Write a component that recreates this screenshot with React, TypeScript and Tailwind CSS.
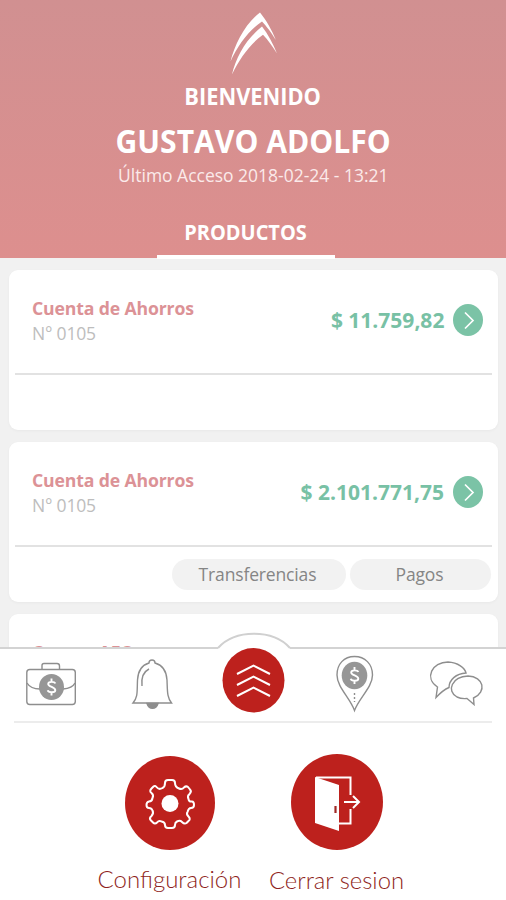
import type { ReactNode } from 'react';

type Account = {
  name: string;
  number?: string;
  balance?: string;
  actions?: boolean;
};

const accounts: Account[] = [
  { name: 'Cuenta de Ahorros', number: 'N° 0105', balance: '$ 11.759,82' },
  { name: 'Cuenta de Ahorros', number: 'N° 0105', balance: '$ 2.101.771,75', actions: true },
  { name: 'Cuenta AFC' },
];

function Logo() {
  return (
    <svg className="block h-[64px] w-[50px] shrink-0" viewBox="0 0 50 64">
      <path d="M2.500 49.500C7 32 17 12 32 0.500C38 8 44 18 47.800 28C43 20 39 15 34 9.500C21 18 10 33 2.500 49.500Z" fill="#fff" />
      <path d="M4 62.500C8 45 18 27 34 14.500C40 22 45 32 49 41.500C44 34 40 28 35 22.800C22 32 12 46 4 62.500Z" fill="#fff" />
    </svg>
  );
}

function AccountCard({ name, number, balance, actions }: Account) {
  return (
    <div className="h-[160px] shrink-0 rounded-[9px] bg-white shadow-[0_1px_3px_rgba(0,0,0,0.04)]">
      <div className="mx-[6px] flex h-[105px] justify-between border-b-2 border-[#e2e2e2] pl-[17px] pr-[9px]">
        <div className="pt-[26px]">
          <div className="origin-left scale-x-[0.98] text-[18px] font-bold leading-[25px] tracking-[-0.15px] text-[#dc9296]">{name}</div>
          <div className="text-[17.5px] leading-[25px] tracking-[-0.2px] text-[#bdbdbd]">{number}</div>
        </div>
        {balance && (
          <div className="flex h-[100px] items-center gap-[9px] text-[20.8px] font-bold text-[#78c1a5]">
            <span className="origin-right scale-x-[1.01] leading-[28px]">{balance}</span>
            <svg className="h-[32px] w-[30px]" viewBox="0 0 30 32">
              <ellipse cx="15" cy="16" rx="15" ry="16" fill="#7bc3a6" />
              <path d="M12 8.500L20 16.500L12 24.500" fill="none" stroke="#fff" strokeWidth="1.7" />
            </svg>
          </div>
        )}
      </div>
      {actions && (
        <div className="flex justify-end gap-[4px] pr-[7px] pt-[12px] text-[17.5px] leading-[31px] tracking-[-0.15px] text-[#858585]">
          <button className="h-[31px] w-[174px] rounded-full bg-[#f2f2f2] pr-[3px]">Transferencias</button>
          <button className="h-[31px] w-[141px] rounded-full bg-[#f2f2f2] pr-[2px]">Pagos</button>
        </div>
      )}
    </div>
  );
}

function DollarBadge({ x, y, rx, ry }: { x: number; y: number; rx: number; ry: number }) {
  return (
    <g transform={`translate(${x} ${y})`}>
      <ellipse rx={rx} ry={ry} fill="#969696" stroke="none" />
      <path d="M3.800 -3.500C3 -5.500 -3.300 -6 -3.300 -3C-3.300 0 3.800 0 3.800 3.200C3.800 6 -3 6 -3.800 3.300M0 -8.500V-5.300M0 5.300V8.500" stroke="#fff" strokeWidth="1.9" fill="none" />
    </g>
  );
}

function TabBar() {
  return (
    <div className="mx-[14px] flex h-[74px] border-b-2 border-[#ececec]">
      <svg className="h-[72px] w-[478px] shrink-0 overflow-visible" viewBox="14 649 478 72" fill="none" stroke="#8e8e8e" strokeWidth="1.4">
        {/* briefcase */}
        <rect x="26.8" y="669.5" width="48.5" height="35" rx="3" />
        <path d="M42 669V665.500Q42 663.500 44 663.500H57Q59.500 663.500 59.500 666V669M27 683C30 688 35 689 40 689M63 689C69 688.500 73 687 75 683" />
        <DollarBadge x={51.5} y={687} rx={12.5} ry={13} />
        {/* bell */}
        <path d="M133 703C138 697 137 692 137.500 680C138 671 142 665 149 663C149 659 155 659 155 663C162 665 166.500 671 167 680C167.500 692 167 697 171.500 703ZM142 686C141 677 143 672 149 669" />
        <path d="M147 703.500H158C156 710 149 710 147 703.500Z" fill="#8e8e8e" />
        {/* center button */}
        <ellipse cx="253.5" cy="680.3" rx="31" ry="32.2" fill="#bd211d" stroke="none" />
        <path d="M237 674L253.500 665.500L270 674M237 685L253.500 676.500L270 685M237 696L253.500 687.500L270 696" stroke="#fff" strokeWidth="2" />
        {/* map pin */}
        <path d="M354.500 710.500C350 698 337 687 337 675C337 664 344 656.500 354.500 656.500C365 656.500 372.500 664 372.500 675C372.500 687 359 698 354.500 710.500Z" />
        <DollarBadge x={354.5} y={675.5} rx={12.8} ry={13.8} />
        <path d="M354.500 693V702" strokeDasharray="2 2" />
        {/* chat bubbles */}
        <path d="M436 697.500L437.500 687C424 678 432 662 448 662C458 662.500 465 668 466 673C456 673.500 449 680 449 687.500Q443 690 436 697.500Z" />
        <path d="M474 704.500L473.500 698C487 692 484 676.500 468 676C452 676.500 446 691 457 697Q461 699 467 698.500Q470 701 474 704.500Z" />
      </svg>
    </div>
  );
}

function MenuAction({ label, className, children }: { label: string; className: string; children: ReactNode }) {
  return (
    <div className="flex flex-col items-center">
      {children}
      <span className={`whitespace-nowrap font-['Lato'] font-light leading-[30px] text-[#8f1f22] ${className}`}>{label}</span>
    </div>
  );
}

function GearIcon() {
  return (
    <svg className="h-[94px] w-[91px]" viewBox="0 0 91 94" fill="none" stroke="#fff" strokeWidth="2">
      <ellipse cx="46" cy="47" rx="45" ry="47" fill="#bd211d" stroke="none" />
      <path
        strokeLinejoin="round"
        d="M41 27Q41 24 44 24H48Q51 24 51 27Q51 31 55 32.500Q58 34 60 31.500Q62 29.500 64 31L66 33.500Q68 35.500 65.500 38Q63 40 64.500 43Q65 46 68 45.500Q70 45.500 70 49Q70 52 67 52Q64.500 52 63.500 56Q62 58 64.500 60.500Q67 63 64.500 65L62.500 67Q60.500 68.500 58 66Q56 64 53 65.500Q51 66.500 51 69Q51 72 48 72H44Q41 72 41 69Q41 66 37.500 65.500Q35 64 33 66.500Q31 68.500 29 66.500L26.500 64Q25 62 27.500 60Q30 57.500 28.500 54.500Q27.500 52 25 52Q22.500 52 22.500 49Q22.500 46 25 45.500Q28 45.500 28.500 42Q30 39 27.500 37Q25 35 27.500 32.500L29.500 30.500Q31 29 33 31.500Q35 34 38.500 32Q41 31 41 27Z"
      />
      <circle cx="46" cy="47.5" r="8.5" fill="#fff" stroke="none" />
    </svg>
  );
}

function DoorIcon() {
  return (
    <svg className="h-[96px] w-[92px]" viewBox="0 0 92 96" fill="none" stroke="#fff" strokeWidth="2">
      <ellipse cx="46" cy="48" rx="46" ry="48" fill="#bd211d" stroke="none" />
      <path d="M25 23.500H59.500V41M59.500 55V69.500H48M53 48H68M62 42L68 48L62 54" />
      <path d="M24 23L48 31V77L24 69Z" fill="#fff" stroke="none" />
      <path d="M44.500 52V59" stroke="#9f2926" strokeWidth="2.2" />
    </svg>
  );
}

export default function App() {
  return (
    <div className="h-[900px] w-[506px] overflow-hidden bg-[#f1f1f1] font-['Open_Sans',sans-serif]">
      <header className="flex h-[258px] flex-col items-center bg-linear-to-b from-[#d19091] to-[#dd8f8e] pt-[12px] text-white">
        <Logo />
        <div className="mt-[5px] shrink-0 scale-x-[0.94] text-[23.2px] font-bold leading-[30px]">BIENVENIDO</div>
        <div className="mt-[8px] shrink-0 scale-x-[0.935] text-[32.2px] font-bold leading-[44px]">GUSTAVO ADOLFO</div>
        <div className="ml-[1px] shrink-0 scale-x-[0.95] text-[18.4px] leading-[24px] text-[#fbeaea]">Último Acceso 2018-02-24 - 13:21</div>
        <div className="mr-[15px] mt-[31px] flex h-[41px] w-[178px] shrink-0 flex-col items-center border-b-4 border-white">
          <span className="scale-x-[0.95] text-[21px] font-bold leading-[28px]">PRODUCTOS</span>
        </div>
      </header>

      <main className="flex h-[389px] flex-col gap-[12px] overflow-hidden pl-[9px] pr-[8px] pt-[12px]">
        {accounts.map((account, i) => (
          <AccountCard key={i} {...account} />
        ))}
      </main>

      <section className="relative h-[253px] border-t-2 border-[#d3d3d3] bg-white">
        {/* raised edge above the center button */}
        <svg className="absolute left-[210px] top-[-19px] h-[24px] w-[88px]" viewBox="0 0 88 24">
          <path d="M8 18C25 -1 63 -1 80 18V24H8Z" fill="#fff" />
          <path d="M8 18C25 -1 63 -1 80 18" fill="none" stroke="#d0d0d0" strokeWidth="2" />
        </svg>
        <div className="relative">
          <TabBar />
        </div>
        <div className="flex gap-[22px] pl-[97px]">
          <div className="w-[145px] pt-[33px]">
            <MenuAction label="Configuración" className="mt-[14px] text-[24px]">
              <GearIcon />
            </MenuAction>
          </div>
          <div className="w-[145px] pt-[31px]">
            <MenuAction label="Cerrar sesion" className="mt-[15px] text-[23.8px]">
              <DoorIcon />
            </MenuAction>
          </div>
        </div>
      </section>
    </div>
  );
}
